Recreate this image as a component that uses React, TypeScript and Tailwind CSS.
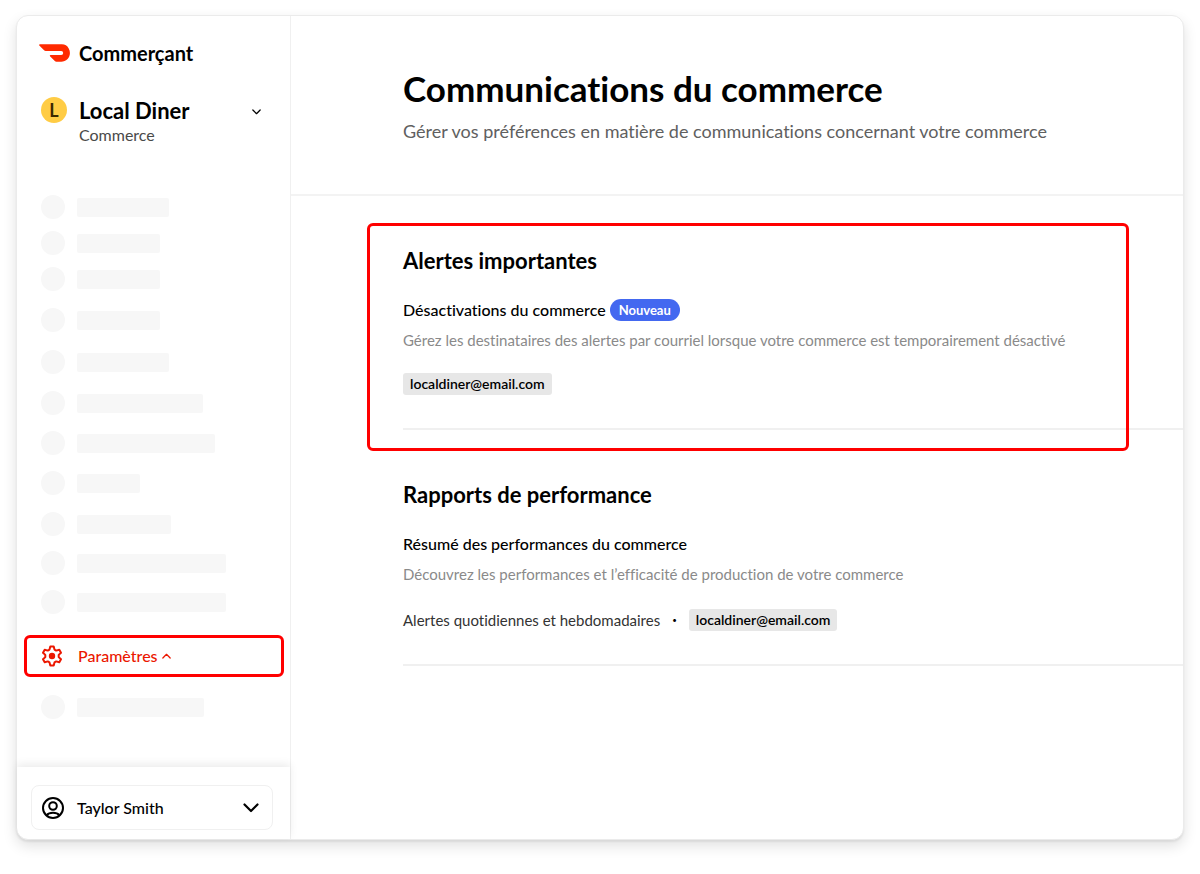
import clsx from 'clsx';

type SkeletonRow = { spacing: string; width: string };

const navRows: SkeletonRow[] = [
	{ spacing: 'mt-0', width: 'w-[92px]' },
	{ spacing: 'mt-3', width: 'w-[83px]' },
	{ spacing: 'mt-3', width: 'w-[83px]' },
	{ spacing: 'mt-[17px]', width: 'w-[83px]' },
	{ spacing: 'mt-[18px]', width: 'w-[92px]' },
	{ spacing: 'mt-[17px]', width: 'w-[126px]' },
	{ spacing: 'mt-4', width: 'w-[138px]' },
	{ spacing: 'mt-4', width: 'w-[63px]' },
	{ spacing: 'mt-[17px]', width: 'w-[94px]' },
	{ spacing: 'mt-[15px]', width: 'w-[149px]' },
	{ spacing: 'mt-[15px]', width: 'w-[149px]' },
];

const Logo = () => (
	<svg viewBox="0 5 24 14" className="h-[18px] w-[31px] shrink-0" fill="#ff2a00">
		<path d="M23.071 8.409a6.09 6.09 0 0 0-5.396-3.228H.584A.589.589 0 0 0 .17 6.184L3.894 9.93a1.752 1.752 0 0 0 1.242.516h12.049a1.554 1.554 0 1 1 .031 3.108H8.91a.589.589 0 0 0-.415 1.003l3.725 3.747a1.75 1.75 0 0 0 1.242.516h3.757c4.887 0 8.584-5.225 5.852-10.413" />
	</svg>
);

const GearIcon = () => (
	<svg
		viewBox="0 0 24 24"
		className="size-6 shrink-0"
		fill="none"
		stroke="currentColor"
		strokeWidth="2"
		strokeLinejoin="round"
	>
		<path d="M10.300 2.500h3.400l.8 3.100 1.700 1 3.100-.9 1.700 3-2.300 2.200v2.200l2.300 2.200-1.700 3-3.100-.9-1.700 1-.8 3.100h-3.400l-.8-3.100-1.700-1-3.100.9-1.700-3 2.300-2.200v-2.200L3 8.700l1.700-3 3.100.9 1.700-1z" />
		<circle cx="12" cy="12" r="3.200" fill="currentColor" stroke="none" />
	</svg>
);

const UserIcon = () => (
	<svg
		viewBox="0 0 24 24"
		className="size-6 shrink-0"
		fill="none"
		stroke="currentColor"
		strokeWidth="2"
	>
		<circle cx="12" cy="12" r="10" />
		<circle cx="12" cy="10" r="3.800" />
		<path d="M5.500 19.200c1.500-1.600 3.600-2.400 6.500-2.400s5 .8 6.500 2.400" />
	</svg>
);

const Chevron = ({ className }: { className?: string }) => (
	<svg
		viewBox="0 0 16 10"
		className={clsx('shrink-0', className)}
		fill="none"
		stroke="currentColor"
		strokeWidth="2.200"
		strokeLinecap="round"
		strokeLinejoin="round"
	>
		<path d="M1.500 1.500 8 8l6.500-6.500" />
	</svg>
);

const Skeleton = ({ spacing, width }: SkeletonRow) => (
	<li className={clsx('flex items-center gap-3', spacing)}>
		<span className="size-6 rounded-full bg-[#f7f7f7]" />
		<span className={clsx('h-[19px] rounded-xs bg-[#f7f7f7]', width)} />
	</li>
);

const EmailTag = ({ email }: { email: string }) => (
	<span className="rounded-[3px] bg-[#e7e7e7] px-[7px] text-[14px] leading-[22px] font-semibold text-black">
		{email}
	</span>
);

const Sidebar = () => (
	<aside className="flex w-[274px] shrink-0 flex-col border-r border-[#f0f0f0]">
		<div className="flex items-center gap-[9px] pt-[23px] pl-[22px]">
			<Logo />
			<span className="text-[20px] leading-7 font-bold">Commerçant</span>
		</div>

		<button type="button" className="mt-[30px] flex items-start pr-[29px] pl-6 text-left">
			<span className="flex size-[26px] items-center justify-center rounded-full bg-[#ffcc45] text-[18px] leading-6 font-bold text-[#3a2800]">
				L
			</span>
			<span className="ml-3 flex-1">
				<span className="block text-[22px] leading-7 font-bold">Local Diner</span>
				<span className="block text-[16px] leading-5 text-[#494949]">Commerce</span>
			</span>
			<Chevron className="mt-3 h-[6px] w-[9px]" />
		</button>

		<nav className="mt-[50px] flex-1">
			<ul className="pl-6">
				{navRows.map((row, i) => (
					<Skeleton key={i} {...row} />
				))}
			</ul>
			<a
				href="#parametres"
				className="mt-[21px] mr-1.5 ml-[7px] flex h-[42px] items-center rounded-md border-3 border-[#ff0000] pl-[13px] text-[16px] text-[#eb1700]"
			>
				<GearIcon />
				<span className="mr-1 ml-3.5 font-medium">Paramètres</span>
				<Chevron className="h-[6px] w-[9px] rotate-180" />
			</a>
			<ul className="pl-6">
				<Skeleton spacing="mt-[18px]" width="w-[127px]" />
			</ul>
		</nav>

		<div className="rounded-bl-xl pt-[18px] pr-[17px] pb-[9px] pl-3.5 shadow-[0_-3px_8px_rgba(0,0,0,0.08)]">
			<button
				type="button"
				className="flex h-[45px] w-full items-center rounded-lg border border-[#f0f0f0] px-[9px] text-[16px] font-medium"
			>
				<UserIcon />
				<span className="ml-3 flex-1 text-left">Taylor Smith</span>
				<Chevron className="mr-1 h-[10px] w-4" />
			</button>
		</div>
	</aside>
);

const App = () => {
	return (
		<div className="flex min-h-screen bg-white px-4 pt-[15px] pb-[34px] font-['Lato',sans-serif] text-black [font-variant-ligatures:no-common-ligatures]">
			<div className="flex flex-1 rounded-xl border border-[#ebebeb] bg-white shadow-[0_2px_2px_rgba(0,0,0,0.06),0_6px_14px_rgba(0,0,0,0.12)]">
				<Sidebar />

				<main className="min-w-0 flex-1">
					<header className="border-b-2 border-[#f3f3f3] pt-12 pb-[51px] pl-28">
						<h1 className="text-[35px] leading-12 font-bold">
							Communications du commerce
						</h1>
						<p className="mt-[7px] text-[18px] leading-6 text-[#606060]">
							Gérer vos préférences en matière de communications concernant votre commerce
						</p>
					</header>

					<section className="relative ml-28 border-b-2 border-[#f0f0f0] pt-[49px] pb-[33px]">
						<div className="pointer-events-none absolute top-[27px] right-[54px] -bottom-[23px] -left-9 rounded-md border-3 border-[#ff0000]" />
						<h2 className="text-[22px] leading-8 font-bold">Alertes importantes</h2>
						<div className="mt-[22px] flex items-center gap-1">
							<h3 className="text-[16px] leading-[22px] font-medium">
								Désactivations du commerce
							</h3>
							<span className="rounded-full bg-[#4368f0] px-[9px] text-[13px] leading-[22px] font-bold text-white">
								Nouveau
							</span>
						</div>
						<p className="mt-2 text-[15px] leading-[22px] text-[#8a8a8a]">
							Gérez les destinataires des alertes par courriel lorsque votre commerce est temporairement désactivé
						</p>
						<div className="mt-[22px] flex">
							<EmailTag email="localdiner@email.com" />
						</div>
					</section>

					<section className="ml-28 border-b-2 border-[#f0f0f0] pt-[49px] pb-[33px]">
						<h2 className="text-[22px] leading-8 font-bold">Rapports de performance</h2>
						<h3 className="mt-[22px] text-[16px] leading-[22px] font-medium">
							Résumé des performances du commerce
						</h3>
						<p className="mt-2 text-[15px] leading-[22px] text-[#8a8a8a]">
							Découvrez les performances et l’efficacité de production de votre commerce
						</p>
						<div className="mt-6 flex items-center gap-3 text-[15px] leading-[22px] text-[#333333]">
							<span>Alertes quotidiennes et hebdomadaires</span>
							<span className="text-[8px] text-black">•</span>
							<EmailTag email="localdiner@email.com" />
						</div>
					</section>
				</main>
			</div>
		</div>
	);
};

export default App;
